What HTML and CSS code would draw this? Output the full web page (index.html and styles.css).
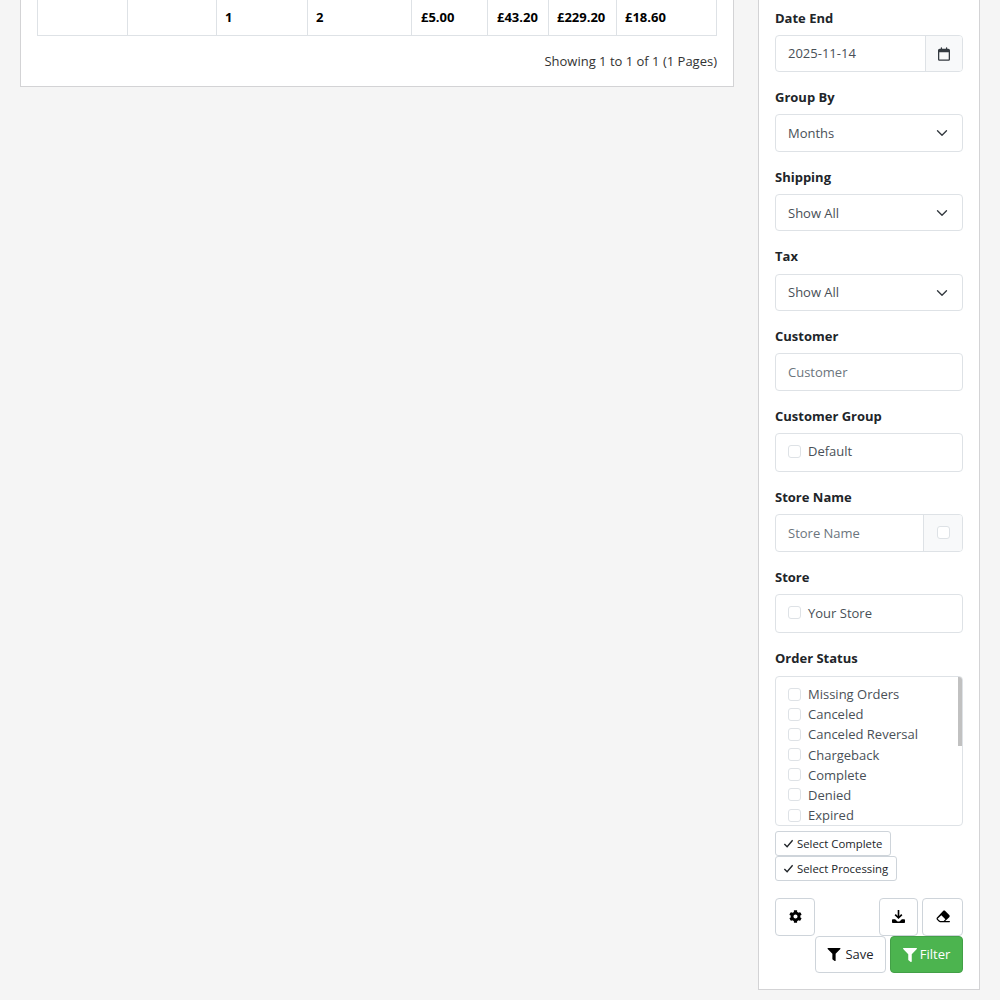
FILE: index.html
```html
<!DOCTYPE html>
<html lang="en">
<head>
<meta charset="utf-8">
<title>Sale Report</title>
<link rel="stylesheet" href="styles.css">
</head>
<body>
<div class="page">
  <main class="card report">
    <table class="totals">
      <colgroup><col class="c1"><col class="c2"><col class="c3"><col class="c4"><col class="c5"><col class="c6"><col class="c7"><col class="c8"></colgroup>
      <tr><td></td><td></td><td>1</td><td>2</td><td class="nudge">£5.00</td><td class="nudge">£43.20</td><td>£229.20</td><td>£18.60</td></tr>
    </table>
    <div class="showing">Showing 1 to 1 of 1 (1 Pages)</div>
  </main>
  <aside class="card filter">
    <div class="group">
      <label class="lbl">Date End</label>
      <div class="field split">
        <span class="value">2025-11-14</span>
        <span class="addon cal"><svg class="cal-ico" viewBox="0 0 448 512"><path d="M152 24v40h144V24a24 24 0 0 1 48 0v40h40c35 0 64 29 64 64v320c0 35-29 64-64 64H64c-35 0-64-29-64-64V128c0-35 29-64 64-64h40V24a24 24 0 0 1 48 0zM48 192v256c0 9 7 16 16 16h320c9 0 16-7 16-16V192z"/></svg></span>
      </div>
    </div>
    <div class="group"><label class="lbl">Group By</label><div class="field select"><span class="value">Months</span><svg class="chev" viewBox="0 0 16 16"><path d="M2 5l6 6 6-6"/></svg></div></div>
    <div class="group"><label class="lbl">Shipping</label><div class="field select"><span class="value">Show All</span><svg class="chev" viewBox="0 0 16 16"><path d="M2 5l6 6 6-6"/></svg></div></div>
    <div class="group"><label class="lbl">Tax</label><div class="field select"><span class="value">Show All</span><svg class="chev" viewBox="0 0 16 16"><path d="M2 5l6 6 6-6"/></svg></div></div>
    <div class="group"><label class="lbl">Customer</label><div class="field tall"><span class="value ph">Customer</span></div></div>
    <div class="group"><label class="lbl">Customer Group</label><div class="field box tight"><div class="chk"><i></i>Default</div></div></div>
    <div class="group"><label class="lbl">Store Name</label><div class="field split"><span class="value ph">Store Name</span><span class="addon store"><i></i></span></div></div>
    <div class="group"><label class="lbl">Store</label><div class="field box"><div class="chk"><i></i>Your Store</div></div></div>
    <div class="group last">
      <label class="lbl">Order Status</label>
      <div class="field list">
        <div class="chk"><i></i>Missing Orders</div>
        <div class="chk"><i></i>Canceled</div>
        <div class="chk"><i></i>Canceled Reversal</div>
        <div class="chk"><i></i>Chargeback</div>
        <div class="chk"><i></i>Complete</div>
        <div class="chk"><i></i>Denied</div>
        <div class="chk"><i></i>Expired</div>
        <span class="thumb"></span>
      </div>
      <div class="quick">
        <button class="mini"><svg class="tick" viewBox="0 0 12 12"><path d="M1.5 6.5l3 3 6-7"/></svg>Select Complete</button>
        <button class="mini"><svg class="tick" viewBox="0 0 12 12"><path d="M1.5 6.5l3 3 6-7"/></svg>Select Processing</button>
      </div>
    </div>
    <div class="actions">
      <div class="row top">
        <button class="btn gear"><svg class="ico" viewBox="0 0 512 512"><path d="M487.4 315.7l-42.6-24.6c4.3-23.2 4.3-47 0-70.2l42.6-24.6c4.9-2.8 7.1-8.6 5.5-14-11.1-35.6-30-67.8-54.7-94.6-3.8-4.1-10-5.1-14.8-2.3L380.8 110c-17.9-15.4-38.5-27.3-60.8-35.1V25.8c0-5.6-3.9-10.5-9.4-11.7-36.7-8.2-74.3-7.8-109.2 0-5.5 1.2-9.4 6.1-9.4 11.7V75c-22.2 7.9-42.8 19.8-60.8 35.1L88.7 85.5c-4.9-2.8-11-1.9-14.8 2.3-24.7 26.7-43.6 58.9-54.7 94.6-1.7 5.4.6 11.2 5.5 14L67.3 221c-4.3 23.2-4.3 47 0 70.2l-42.6 24.6c-4.9 2.8-7.1 8.6-5.5 14 11.1 35.6 30 67.8 54.7 94.6 3.8 4.1 10 5.1 14.8 2.3l42.6-24.6c17.9 15.4 38.5 27.3 60.8 35.1v49.2c0 5.6 3.9 10.5 9.4 11.7 36.7 8.2 74.3 7.8 109.2 0 5.5-1.2 9.4-6.1 9.4-11.7v-49.2c22.2-7.9 42.8-19.8 60.8-35.1l42.6 24.6c4.9 2.8 11 1.9 14.8-2.3 24.7-26.7 43.6-58.9 54.7-94.6 1.5-5.5-.7-11.3-5.6-14.1zM256 336c-44.1 0-80-35.9-80-80s35.9-80 80-80 80 35.9 80 80-35.9 80-80 80z"/></svg></button>
        <span class="spring"></span>
        <button class="btn dl"><svg class="ico" viewBox="0 0 512 512"><path d="M224 0h64v232l76-76 46 46-154 154-154-154 46-46 76 76zM40 360h84l72 70c16 16 38 26 60 26s44-10 60-26l72-70h84c22 0 40 18 40 40v72c0 22-18 40-40 40H40c-22 0-40-18-40-40v-72c0-22 18-40 40-40z"/></svg></button>
        <button class="btn er"><svg class="ico wide" viewBox="0 0 576 512"><path d="M290 30c25-25 65-25 90 0l165 165c25 25 25 65 0 90L380 441h172c13 0 24 11 24 24s-11 24-24 24H176c-20 0-45-9-66-30L41 390c-25-25-25-65 0-90zM75 334c-6 6-6 16 0 22l69 69c8 8 20 16 32 16h124c10 0 20-4 27-11l58-58-165-165z"/></svg></button>
      </div>
      <div class="row bottom">
        <button class="btn save"><svg class="ico" viewBox="0 0 512 512"><path d="M488 0H24C3 0-8 26 7 41l185 185v206c0 8 4 15 10 20l80 56c16 11 38 0 38-20V226L505 41c15-15 4-41-17-41z"/></svg>Save</button>
        <button class="btn go"><svg class="ico" viewBox="0 0 512 512"><path d="M488 0H24C3 0-8 26 7 41l185 185v206c0 8 4 15 10 20l80 56c16 11 38 0 38-20V226L505 41c15-15 4-41-17-41z"/></svg>Filter</button>
      </div>
    </div>
  </aside>
</div>
</body>
</html>
```
FILE: styles.css
```css
* { box-sizing: border-box; }
html, body { margin: 0; height: 1000px; overflow: hidden; background: #f5f5f5; }
body { font-family: "Open Sans", sans-serif; font-size: 13px; line-height: 19.5px; color: #212529; }
.page { display: flex; align-items: flex-start; gap: 24px; padding: 0 20px; }
.card { background: #fff; border: 1px solid #d3d3d5; border-top: 0; }
.report { width: 714px; height: 87px; padding: 0 16px; }
.totals { width: 679px; border-collapse: collapse; table-layout: fixed; }
.totals td { height: 35.5px; padding: 0 8px; font-weight: 700; color: #000; border: 1px solid #dee2e6; border-top: 0; }
.totals td.nudge { padding-left: 9px; padding-right: 0; }
.c1 { width: 90px; } .c2 { width: 89px; } .c3 { width: 91px; } .c4 { width: 104px; }
.c5 { width: 76px; } .c6 { width: 61px; } .c7 { width: 68px; } .c8 { width: 100px; }
.showing { margin-top: 16px; text-align: right; color: #333; }
.filter { width: 222px; height: 990px; padding: 8.6px 16px 0; }
.group { margin-bottom: 15.9px; }
.group.last { margin-bottom: 17px; }
.lbl { display: block; font-weight: 700; margin-bottom: 6.7px; }
.last .lbl { margin-bottom: 7.3px; }
.field { display: block; position: relative; height: 37.5px; width: 188px; border: 1px solid #dee2e6; border-radius: 4px; background: #fff; color: #495057; padding: 8.65px 12px 0; }
.field.tall { height: 37.7px; }
.split { display: flex; padding: 0; overflow: hidden; }
.split .value { flex: 1; padding: 8.65px 12px 0; }
.addon { background: #f8f9fa; border-left: 1px solid #dee2e6; display: flex; align-items: center; justify-content: center; }
.cal { width: 37px; color: #343a40; }
.cal-ico { display: block; width: 12px; height: 14px; fill: currentColor; }
.store { width: 39px; }
.store i { display: block; width: 13px; height: 13px; border: 1px solid #dee2e6; border-radius: 3px; background: #fff; }
.ph { color: #6c757d; }
.select .chev { position: absolute; right: 14px; top: 12px; width: 12px; height: 12px; fill: none; stroke: #343a40; stroke-width: 1.8; stroke-linecap: round; stroke-linejoin: round; }
.box { height: 39.2px; padding: 8px 12px 0; }
.box.tight { padding-top: 7.4px; }
.chk { display: flex; align-items: center; height: 20.15px; line-height: 20px; }
.chk i { display: block; width: 13px; height: 13px; margin-right: 7px; border: 1px solid #dee2e6; border-radius: 3px; background: #fff; }
.list { height: 150px; padding: 7.55px 12px 0; overflow: hidden; }
.thumb { position: absolute; top: 0; right: 0; width: 4px; height: 69px; background: #c1c1c1; }
.quick { display: flex; flex-direction: column; align-items: flex-start; margin-top: 5px; }
.mini { display: flex; align-items: center; height: 25.1px; padding: 0 7.5px 0 7px; border: 1px solid #ced4da; border-radius: 3px; background: #fff; font: 11.375px/17px "Open Sans", sans-serif; color: #212529; }
.tick { width: 11px; height: 11px; margin-right: 3px; fill: none; stroke: #212529; stroke-width: 1.5; }
.actions { display: flex; flex-direction: column; }
.row { display: flex; justify-content: flex-end; }
.spring { flex: 1; }
.btn { display: flex; align-items: center; justify-content: center; height: 38px; border: 1px solid #ced4da; border-radius: 4px; background: #fff; padding: 0; font: 13px/19.5px "Open Sans", sans-serif; color: #212529; }
.ico { display: block; width: 13px; height: 13px; fill: currentColor; }
.ico.wide { width: 14px; }
.gear { width: 40px; color: #000; }
.dl { width: 39px; margin-right: 4px; color: #000; }
.er { width: 41px; color: #000; }
.top .btn { color: #000; }
.bottom .btn { height: 37px; padding-top: 1px; }
.save { width: 71px; margin-right: 4px; }
.save .ico { margin-right: 4px; width: 14px; color: #000; }
.go { width: 73px; background: #4cb44f; border-color: #43a047; color: #fff; }
.go .ico { margin-right: 3px; width: 14px; height: 14px; }
```
